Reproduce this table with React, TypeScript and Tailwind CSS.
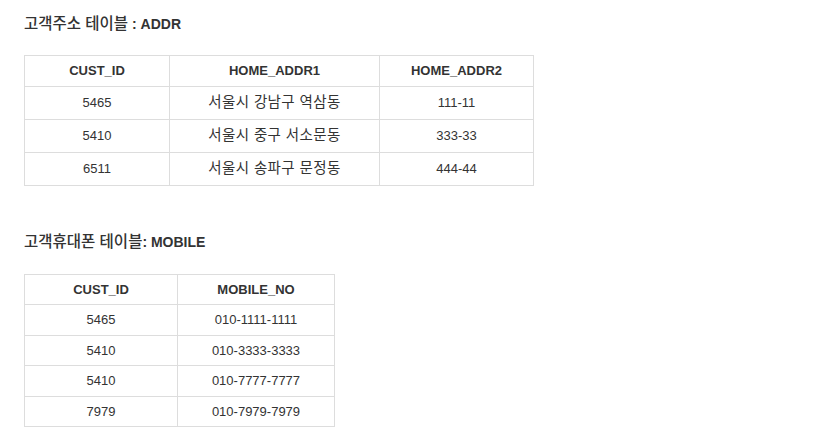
import React from 'react';

type Table = { headers: string[]; widths: string[]; rows: string[][]; headH: string; rowH: string };

const addr: Table = {
  headers: ['CUST_ID', 'HOME_ADDR1', 'HOME_ADDR2'],
  widths: ['w-[145px]', 'w-[210px]', 'w-[154px]'],
  rows: [
    ['5465', '서울시 강남구 역삼동', '111-11'],
    ['5410', '서울시 중구 서소문동', '333-33'],
    ['6511', '서울시 송파구 문정동', '444-44'],
  ],
  headH: 'h-[31px]',
  rowH: 'h-[33px]',
};

const mobile: Table = {
  headers: ['CUST_ID', 'MOBILE_NO'],
  widths: ['w-[153px]', 'w-[157px]'],
  rows: [
    ['5465', '010-1111-1111'],
    ['5410', '010-3333-3333'],
    ['5410', '010-7777-7777'],
    ['7979', '010-7979-7979'],
  ],
  headH: 'h-[30px]',
  rowH: 'h-[30.5px]',
};

const hasKo = (s: string) => /[가-힣]/.test(s);

const DataTable: React.FC<{ t: Table }> = ({ t }) => (
  <table className="border-collapse text-[13px] text-[#333]">
    <thead>
      <tr className={t.headH}>
        {t.headers.map((h, i) => (
          <th key={h} className={`${t.widths[i]} border border-[#ddd] p-0 text-center font-bold`}>
            {h}
          </th>
        ))}
      </tr>
    </thead>
    <tbody>
      {t.rows.map((r, ri) => (
        <tr key={ri} className={t.rowH}>
          {r.map((c, ci) => (
            <td
              key={ci}
              className={`border border-[#ddd] p-0 text-center ${hasKo(c) ? 'text-[14.5px] tracking-[0.4px]' : ''}`}
            >
              {c}
            </td>
          ))}
        </tr>
      ))}
    </tbody>
  </table>
);

export default function App() {
  return (
    <div
      className="w-[818px] h-[440px] bg-white px-[24px] pt-[15px] overflow-hidden"
      style={{ fontFamily: '"Liberation Sans", Arial, "Noto Sans CJK KR", sans-serif' }}
    >
      <h3 className="text-[14px] font-bold text-[#333] leading-[18px]">
        <span className="text-[15.5px] font-medium">고객주소 테이블</span> : ADDR
      </h3>
      <div className="mt-[22px]">
        <DataTable t={addr} />
      </div>
      <h3 className="mt-[47px] text-[14px] font-bold text-[#333] leading-[18px]">
        <span className="text-[15.5px] font-medium">고객휴대폰 테이블</span>: MOBILE
      </h3>
      <div className="mt-[23px]">
        <DataTable t={mobile} />
      </div>
    </div>
  );
}
